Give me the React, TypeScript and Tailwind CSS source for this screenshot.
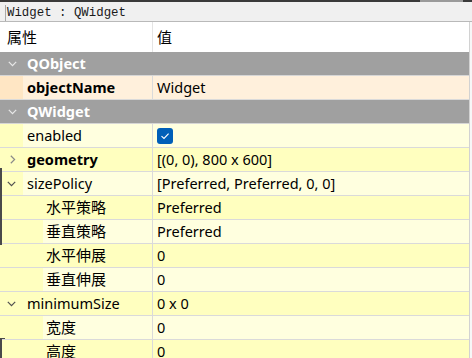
type Shade = "peach" | "pale" | "yellow";

type Row =
  | { kind: "group"; name: string }
  | {
      kind: "prop";
      name: string;
      value?: string;
      check?: boolean;
      bold?: boolean;
      expand?: "down" | "right";
      child?: boolean;
      shade: Shade;
    };

const rows: Row[] = [
  { kind: "group", name: "QObject" },
  { kind: "prop", name: "objectName", value: "Widget", bold: true, shade: "peach" },
  { kind: "group", name: "QWidget" },
  { kind: "prop", name: "enabled", check: true, shade: "pale" },
  { kind: "prop", name: "geometry", value: "[(0, 0), 800 x 600]", bold: true, expand: "right", shade: "yellow" },
  { kind: "prop", name: "sizePolicy", value: "[Preferred, Preferred, 0, 0]", expand: "down", shade: "pale" },
  { kind: "prop", name: "水平策略", value: "Preferred", child: true, shade: "yellow" },
  { kind: "prop", name: "垂直策略", value: "Preferred", child: true, shade: "pale" },
  { kind: "prop", name: "水平伸展", value: "0", child: true, shade: "yellow" },
  { kind: "prop", name: "垂直伸展", value: "0", child: true, shade: "pale" },
  { kind: "prop", name: "minimumSize", value: "0 x 0", expand: "down", shade: "yellow" },
  { kind: "prop", name: "宽度", value: "0", child: true, shade: "pale" },
  { kind: "prop", name: "高度", value: "0", child: true, shade: "yellow" },
];

// row colour / branch strip colour
const rowBg: Record<Shade, string> = {
  peach: "bg-[#fff0dc]",
  pale: "bg-[#ffffdf]",
  yellow: "bg-[#ffffbf]",
};
const stripBg: Record<Shade, string> = {
  peach: "bg-[#ffe6c4]",
  pale: "bg-[#ffffbf]",
  yellow: "bg-[#ffffbf]",
};

const ChevronDown = ({ color }: { color: string }) => (
  <svg width="9" height="6" viewBox="0 0 9 6" fill="none">
    <path d="M0.8 0.8 L4.5 4.6 L8.2 0.8" stroke={color} strokeWidth="1.2" />
  </svg>
);

const ChevronRight = () => (
  <svg width="6" height="9" viewBox="0 0 6 9" fill="none">
    <path d="M0.8 0.8 L4.6 4.5 L0.8 8.2" stroke="#8a8a8a" strokeWidth="1.2" />
  </svg>
);

const Check = () => (
  <div className="w-[16px] h-[16px] rounded-[3px] bg-[#005fb8] flex items-center justify-center">
    <svg width="10" height="8" viewBox="0 0 10 8" fill="none">
      <path d="M1.5 4.2 L4 6.5 L8.6 1.6" stroke="white" strokeWidth="1.1" />
    </svg>
  </div>
);

const GroupRow = ({ name }: { name: string }) => (
  <div className="h-[24px] flex items-center bg-[#a0a0a0] border-b border-[#d6d6d6]">
    <div className="w-[23px] flex justify-center pl-[1px]">
      <ChevronDown color="#e8e8e8" />
    </div>
    <span className="pl-[4px] font-bold text-white">{name}</span>
  </div>
);

const PropRow = ({ row }: { row: Extract<Row, { kind: "prop" }> }) => {
  const cjk = /[\u4e00-\u9fff]/.test(row.name);
  return (
    <div className={`h-[24px] flex border-b border-[#dadada] ${rowBg[row.shade]}`}>
      <div className="w-[152px] flex items-center">
        <div
          className={`h-full flex items-center justify-center ${stripBg[row.shade]} ${
            row.child ? "w-[43px]" : "w-[23px]"
          }`}
        >
          {row.expand === "down" && <ChevronDown color="#505050" />}
          {row.expand === "right" && (
            <span className="pl-[2px]">
              <ChevronRight />
            </span>
          )}
        </div>
        <span
          className={`${row.child ? "pl-[3px]" : "pl-[4px]"} ${row.bold ? "font-bold" : ""} ${
            cjk ? "text-[15px]" : ""
          } text-black`}
        >
          {row.name}
        </span>
      </div>
      <div className="flex-1 flex items-center border-l border-[#dadada] pl-[4px] text-black">
        {row.check ? <Check /> : row.value}
      </div>
    </div>
  );
};

export default function App() {
  return (
    <div className="relative w-[472px] h-[358px] overflow-hidden bg-white font-['Noto_Sans','Noto_Sans_CJK_SC',sans-serif] text-[14.5px] leading-none">
      {/* window edge */}
      <div className="flex h-[2px]">
        <div className="w-[420px] bg-[#3a3a3a]" />
        <div className="w-[43px] bg-[#9a9a9a]" />
        <div className="flex-1 bg-[#3a3a3a]" />
      </div>

      {/* class label */}
      <div className="h-[20px] bg-[#f0f0f0] border-b border-[#b9b9b9] pt-[3px] pl-[5px]">
        <div className="h-full border-l border-[#a8a8a8] pl-[1px] flex items-center font-['Liberation_Mono',monospace] text-[12.4px] text-[#1a1a1a]">
          Widget : QWidget
        </div>
      </div>

      <div className="flex">
        <div className="w-[469px]">
          {/* header */}
          <div className="h-[30px] flex bg-white">
            <div className="w-[152px] flex items-center pl-[7px] text-[15px] text-black">属性</div>
            <div className="flex-1 flex items-center border-l border-[#e4e4e4] pl-[4px] text-[15px] text-black">
              值
            </div>
          </div>

          {rows.map((r, i) =>
            r.kind === "group" ? <GroupRow key={i} name={r.name} /> : <PropRow key={i} row={r} />
          )}
        </div>
        <div className="w-px bg-[#d2d2d2]" />
        <div className="flex-1 bg-[#f7f7f7]" />
      </div>

      {/* edge of the window behind */}
      <div className="absolute left-0 top-[168px] w-[2px] h-[77px] bg-[#4a4a4a]" />
      <div className="absolute left-0 top-[338px] w-[5px] h-px bg-[#4a4a4a]" />
      <div className="absolute left-0 top-[338px] w-[2px] h-[20px] bg-[#4a4a4a]" />
    </div>
  );
}
